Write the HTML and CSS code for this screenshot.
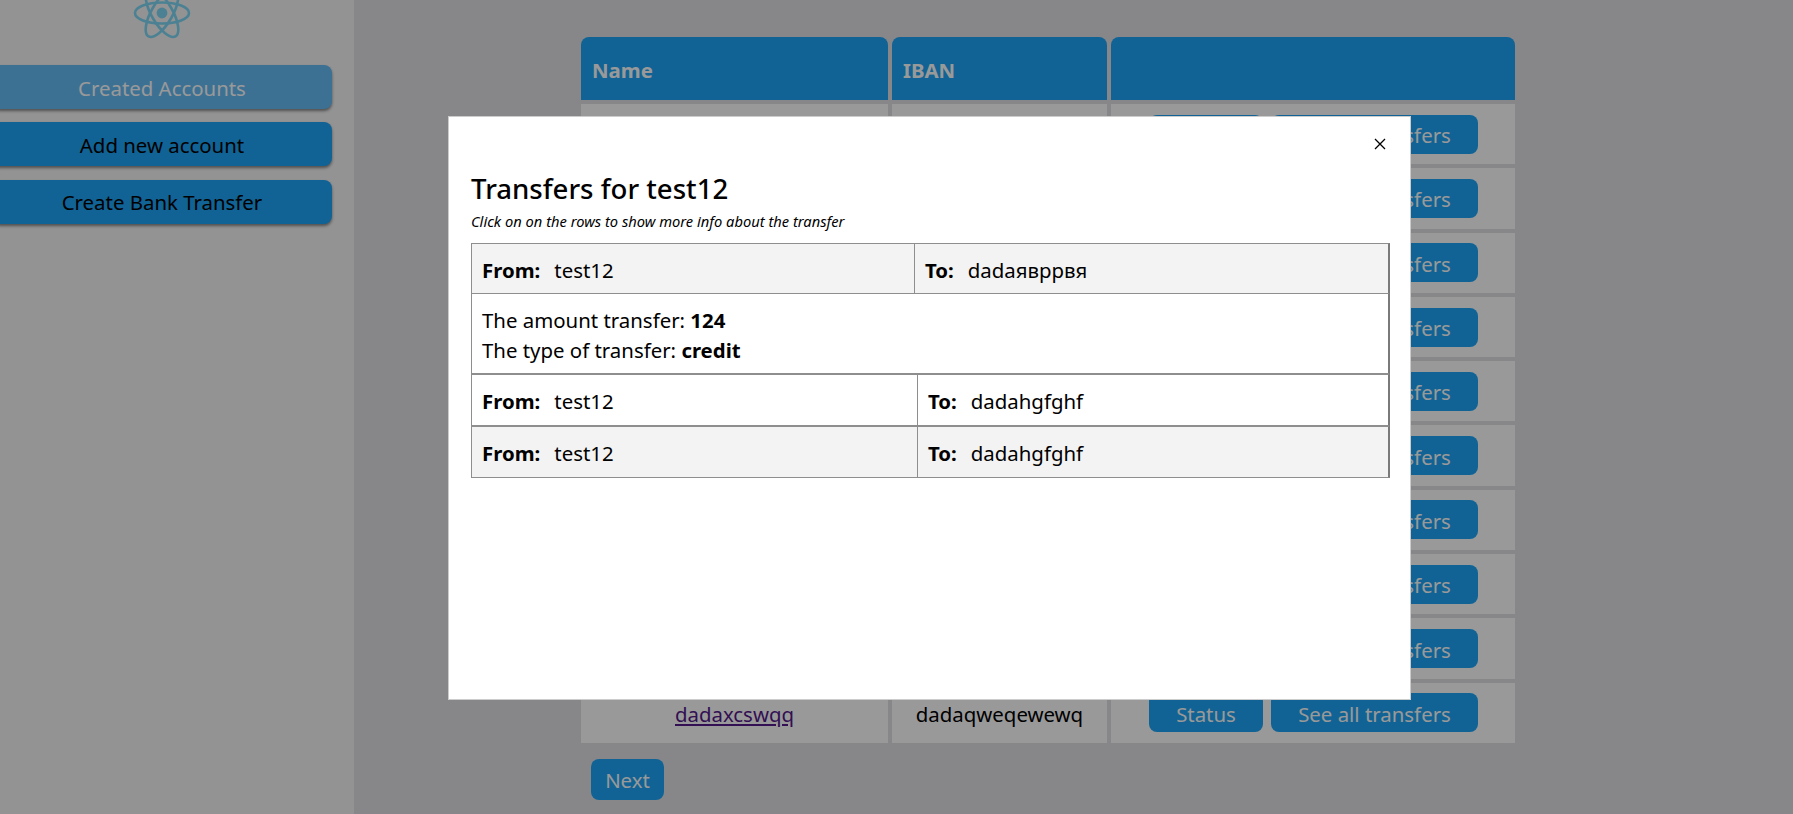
FILE: index.html
```html
<!DOCTYPE html>
<html lang="en">
<head>
<meta charset="utf-8">
<title>Created Accounts</title>
<link rel="stylesheet" href="styles.css">
</head>
<body>
<div class="app">
  <aside class="sidebar">
    <svg class="logo" viewBox="0 0 60 60" width="60" height="60" aria-hidden="true">
      <g fill="none" stroke="currentColor" stroke-width="2.6">
        <ellipse cx="30" cy="30" rx="27" ry="10.5"/>
        <ellipse cx="30" cy="30" rx="27" ry="10.5" transform="rotate(60 30 30)"/>
        <ellipse cx="30" cy="30" rx="27" ry="10.5" transform="rotate(120 30 30)"/>
      </g>
      <circle cx="30" cy="30" r="5.4" fill="currentColor"/>
    </svg>
    <nav class="menu">
      <a class="menu-item active">Created Accounts</a>
      <a class="menu-item">Add new account</a>
      <a class="menu-item">Create Bank Transfer</a>
    </nav>
  </aside>
  <main class="content">
    <div class="accounts">
      <div class="th">Name</div><div class="th">IBAN</div><div class="th"></div>

      <div class="td"><a class="link">test12</a></div><div class="td">dadaяврpвя</div>
      <div class="td actions"><button class="btn">Status</button><button class="btn">See all transfers</button></div>
      <div class="td"><a class="link">dadahgfghf</a></div><div class="td">dadaqweqe</div>
      <div class="td actions"><button class="btn">Status</button><button class="btn">See all transfers</button></div>
      <div class="td"><a class="link">dadaasdas</a></div><div class="td">dadaqwerty</div>
      <div class="td actions"><button class="btn">Status</button><button class="btn">See all transfers</button></div>
      <div class="td"><a class="link">dadazxcvb</a></div><div class="td">dadaqwewq</div>
      <div class="td actions"><button class="btn">Status</button><button class="btn">See all transfers</button></div>
      <div class="td"><a class="link">dadaqwer</a></div><div class="td">dadaqwqwe</div>
      <div class="td actions"><button class="btn">Status</button><button class="btn">See all transfers</button></div>
      <div class="td"><a class="link">dadatyui</a></div><div class="td">dadaewqew</div>
      <div class="td actions"><button class="btn">Status</button><button class="btn">See all transfers</button></div>
      <div class="td"><a class="link">dadaghjk</a></div><div class="td">dadaweqwe</div>
      <div class="td actions"><button class="btn">Status</button><button class="btn">See all transfers</button></div>
      <div class="td"><a class="link">dadabnmq</a></div><div class="td">dadaqeqwe</div>
      <div class="td actions"><button class="btn">Status</button><button class="btn">See all transfers</button></div>
      <div class="td"><a class="link">dadaopas</a></div><div class="td">dadaqqwew</div>
      <div class="td actions"><button class="btn">Status</button><button class="btn">See all transfers</button></div>
      <div class="td"><a class="link">dadaxcswqq</a></div><div class="td">dadaqweqewewq</div>
      <div class="td actions"><button class="btn">Status</button><button class="btn">See all transfers</button></div>
    </div>
    <button class="btn next">Next</button>
  </main>
</div>

<div class="overlay">
  <section class="modal">
    <button class="close" aria-label="Close">
      <svg viewBox="0 0 12 12" width="12" height="12" aria-hidden="true"><path d="M1 1l10 10M11 1L1 11" fill="none" stroke="#000" stroke-width="1.3"/></svg>
    </button>
    <h2 class="title">Transfers for test12</h2>
    <p class="hint">Click on on the rows to show more info about the transfer</p>
    <div class="transfers">
      <div class="tx shaded first">
        <div class="cell from"><b>From:</b><span>test12</span></div>
        <div class="cell"><b>To:</b><span>dadaяврpвя</span></div>
      </div>
      <div class="details">
        <div>The amount transfer: <b>124</b></div>
        <div>The type of transfer: <b>credit</b></div>
      </div>
      <div class="tx">
        <div class="cell from"><b>From:</b><span>test12</span></div>
        <div class="cell"><b>To:</b><span>dadahgfghf</span></div>
      </div>
      <div class="tx shaded">
        <div class="cell from"><b>From:</b><span>test12</span></div>
        <div class="cell"><b>To:</b><span>dadahgfghf</span></div>
      </div>
    </div>
  </section>
</div>
</body>
</html>
```
FILE: styles.css
```css
* { box-sizing: border-box; }
html, body { margin: 0; height: 100%; overflow: hidden; }
body {
  font-family: "Noto Sans", "Open Sans", "Liberation Sans", sans-serif;
  font-size: 20.4px;
  color: #000;
  background: #e1e2e7;
}
.app { display: flex; height: 814px; }

.sidebar {
  flex: 0 0 354px;
  background: #f5f5f5;
}
.logo { display: block; margin: -17px 0 0 132px; color: #7fd8f5; }
.menu { display: flex; flex-direction: column; gap: 13.4px; margin: 22px 0 0 -8px; width: 340px; }
.menu-item {
  display: flex; align-items: center; justify-content: center;
  height: 44px;
  padding-top: 1px;
  border-radius: 8px;
  background: #1ca5f7;
  color: #000;
  box-shadow: 0 2px 3px rgba(0,0,0,.45);
}
.menu-item.active { background: #64bcf7; color: #fff; }

.content { flex: 1; padding: 37px 0 0 227px; }
.accounts {
  display: grid;
  grid-template-columns: 307px 215px 404px;
  grid-auto-rows: 60.3px;
  grid-template-rows: 63px;
  gap: 4px;
}
.th {
  background: #1ca5f7;
  color: #fff;
  font-weight: 700;
  padding: 2px 11px 0;
  display: flex; align-items: center;
  border-radius: 8px 8px 0 0;
}
.td {
  background: #fff;
  display: flex; align-items: center; justify-content: center;
  padding-top: 2px;
}
.link { color: #551a8b; text-decoration: underline; }
.actions { justify-content: flex-end; padding: 0 37px 0 0; gap: 8px; }
.btn {
  font: inherit;
  color: #fff;
  background: #1ca5f7;
  border: 0;
  border-radius: 8px;
  height: 39px;
  padding: 2px 0 0;
}
.actions .btn:first-child { width: 114px; }
.actions .btn:last-child { width: 207px; }
.next { width: 73px; height: 41px; margin: 16px 0 0 10px; display: block; }

.overlay { position: fixed; inset: 0; background: rgba(0,0,0,.4); }
.modal {
  position: absolute;
  left: 448px; top: 116px;
  width: 963px; height: 584px;
  background: #fff;
  border: 1px solid #ccc;
  padding: 0 22px;
}
.close {
  position: absolute; top: 21px; right: 24px;
  background: none; border: 0; padding: 0; width: 12px; height: 12px; line-height: 0;
}
.title { margin: 52px 0 0; font-size: 27.6px; font-weight: 500; line-height: 38px; }
.hint { margin: 4px 0 0; font-size: 14.7px; font-style: italic; line-height: 20px; }
.transfers { margin-top: 12px; width: 919px; }
.tx {
  display: flex; height: 52px;
  border: 1px solid #8e8e8e;
  border-right: 2px solid #7a7a7a;
}
.tx.first { height: 51px; }
.shaded { background: #f3f3f3; }
.cell { flex: 1; display: flex; align-items: center; padding: 2px 10px 0; }
.cell.from { flex: 0 0 446px; border-right: 1px solid #8e8e8e; }
.first .cell.from { flex-basis: 443px; }
.cell b { margin-right: 14px; }
.details {
  height: 80px;
  padding: 11px 10px 0;
  line-height: 30px;
  border: 1px solid #8e8e8e;
  border-top: 0;
  border-right: 2px solid #7a7a7a;
}
```
